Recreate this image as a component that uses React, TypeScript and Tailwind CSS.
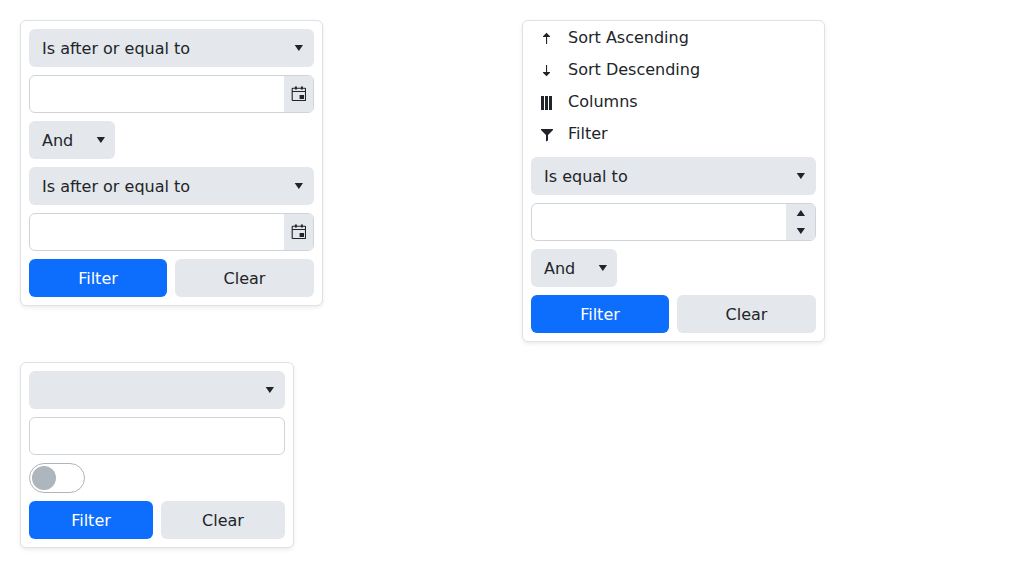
import type { ReactNode } from 'react';

function Panel({ width, children }: { width: string; children: ReactNode }) {
  return (
    <section
      className={`${width} rounded-md border border-[#dee2e6] bg-white shadow-[0_2px_4px_rgba(0,0,0,0.075)]`}
    >
      {children}
    </section>
  );
}

function Caret({ up = false }: { up?: boolean }) {
  return (
    <svg width="16" height="16" viewBox="0 0 16 16" fill="currentColor" className="shrink-0">
      {up ? <path d="M3.700 11h8.300L7.850 5z" /> : <path d="M3.700 5h8.300l-4.150 6z" />}
    </svg>
  );
}

function Dropdown({ label = '', compact = false }: { label?: string; compact?: boolean }) {
  return (
    <button
      type="button"
      className={`${compact ? 'w-[86px] pr-[6.5px]' : 'w-full pr-[7px]'} flex h-[38px] items-center justify-between rounded-md bg-[#e4e7eb] pl-[13px] text-left`}
    >
      <span className="pt-0.5">{label}</span>
      <Caret />
    </button>
  );
}

function Field({ children }: { children?: ReactNode }) {
  return (
    <div className="flex h-[38px] w-full overflow-hidden rounded-md border border-[#ced4da] bg-white">
      <input className="min-w-0 flex-1 px-3 outline-none" />
      {children}
    </div>
  );
}

function DateField() {
  return (
    <Field>
      <button type="button" className="flex w-[29px] items-center justify-center bg-[#e4e7eb]">
        <svg width="15" height="16" viewBox="0 0 15 16" fill="none" stroke="currentColor">
          <rect x="1.200" y="2.200" width="13.300" height="12.300" rx="0.500" strokeWidth="1.100" />
          <path d="M1.200 5.500h13.300" />
          <path d="M4.900 0.600v2.800M10.900 0.600v2.800" strokeWidth="2" />
          <path d="M8.600 9H13v4H8.600z" fill="currentColor" stroke="none" />
        </svg>
      </button>
    </Field>
  );
}

function NumberField() {
  return (
    <Field>
      <div className="flex w-[29px] flex-col bg-[#e4e7eb]">
        <button type="button" className="flex h-[18px] items-center pl-[7px]">
          <Caret up />
        </button>
        <button type="button" className="flex h-[18px] items-center pl-[7px]">
          <Caret />
        </button>
      </div>
    </Field>
  );
}

function Actions({ columns = 'grid-cols-[138px_139px]' }: { columns?: string }) {
  return (
    <div className={`grid gap-2 ${columns}`}>
      <button type="button" className="h-[38px] rounded-md bg-[#0d6efd] pt-0.5 text-white">
        Filter
      </button>
      <button type="button" className="h-[38px] rounded-md bg-[#e4e7eb] pt-0.5">
        Clear
      </button>
    </div>
  );
}

function MenuItem({ label, children }: { label: string; children: ReactNode }) {
  return (
    <li className="flex h-8 items-center pl-4">
      <svg width="16" height="16" viewBox="0 0 16 16" fill="currentColor" className="mt-0.5 mr-[13px] shrink-0">
        {children}
      </svg>
      <span className="pt-0.5">{label}</span>
    </li>
  );
}

export default function App() {
  return (
    <main className="grid h-[568px] grid-cols-[502px_502px] grid-rows-[342px_1fr] items-start overflow-hidden bg-white pt-5 pl-5 font-['DejaVu_Sans',sans-serif] text-base text-[#212529]">
      <Panel width="w-[303px]">
        <div className="flex flex-col gap-2 p-2">
          <Dropdown label="Is after or equal to" />
          <DateField />
          <Dropdown label="And" compact />
          <Dropdown label="Is after or equal to" />
          <DateField />
          <Actions />
        </div>
      </Panel>

      <Panel width="w-[303px]">
        <ul>
          <MenuItem label="Sort Ascending">
            <path d="M7 14V7H4v-.8L7.500 2.800 11 6.200V7H8.100v7z" />
          </MenuItem>
          <MenuItem label="Sort Descending">
            <path d="M7 3v7H4v.8l3.500 3.400L11 10.800V10H8.100V3z" />
          </MenuItem>
          <MenuItem label="Columns">
            <path d="M2 2h3v14H2zM6 2h3v14H6zM10 2h3v14h-3z" />
          </MenuItem>
          <MenuItem label="Filter">
            <path d="M2 3h12v1L9 9v5.500l-2 1V9L2 4z" />
          </MenuItem>
        </ul>
        <div className="flex flex-col gap-2 p-2">
          <Dropdown label="Is equal to" />
          <NumberField />
          <Dropdown label="And" compact />
          <Actions />
        </div>
      </Panel>

      <Panel width="w-[274px]">
        <div className="flex flex-col gap-2 p-2">
          <Dropdown />
          <Field />
          <button
            type="button"
            role="switch"
            aria-checked="false"
            className="flex h-[30px] w-14 items-center rounded-full border border-[#adb5bd] bg-white pl-0.5"
          >
            <span className="size-6 rounded-full bg-[#adb5bd]" />
          </button>
          <Actions columns="grid-cols-2" />
        </div>
      </Panel>
    </main>
  );
}
